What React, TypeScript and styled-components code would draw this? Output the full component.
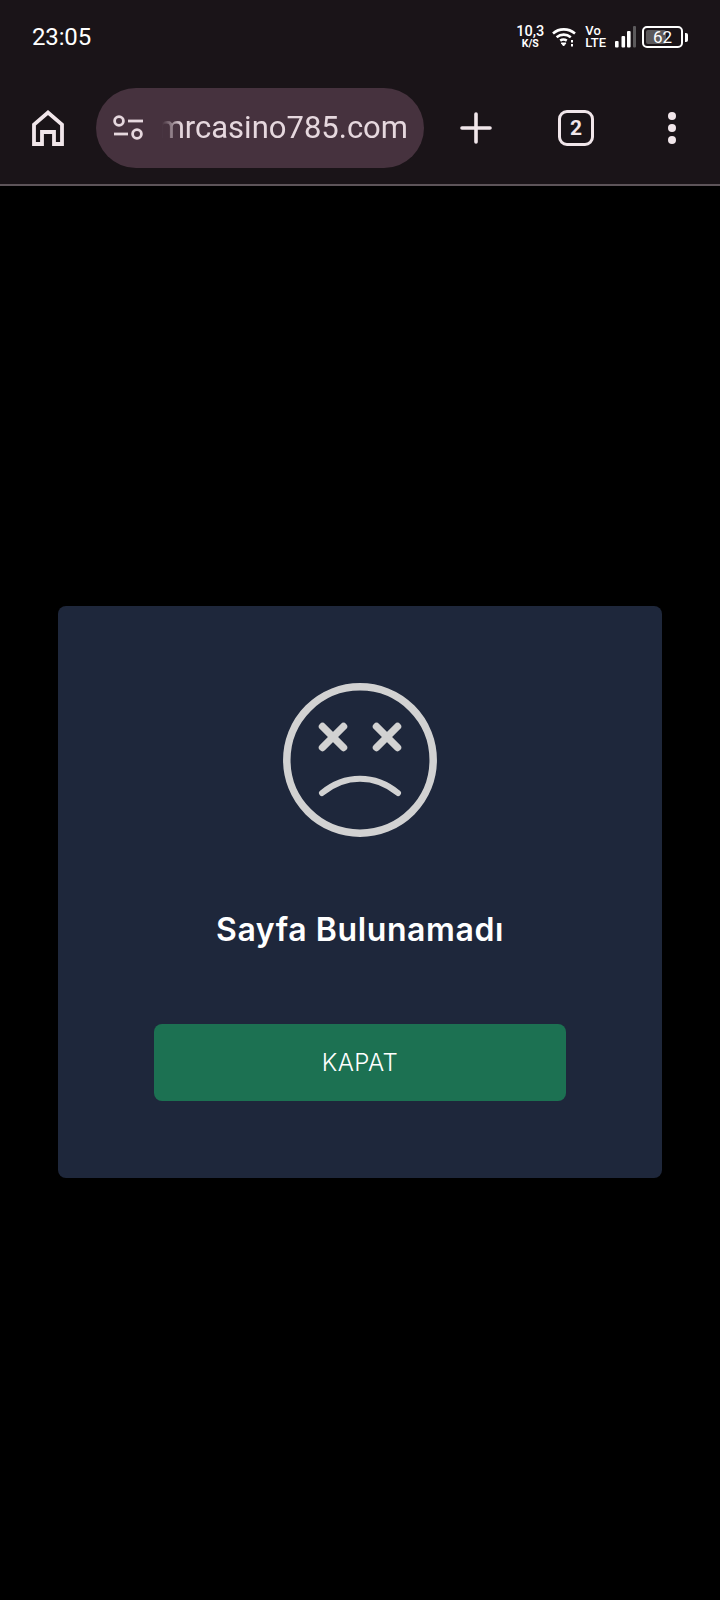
import { createGlobalStyle, styled } from "styled-components";

const GlobalStyle = createGlobalStyle`
  html, body {
    margin: 0;
    padding: 0;
    background: #000;
  }
  body {
    font-family: "Roboto", "Liberation Sans", sans-serif;
  }
`;

function HomeIcon() {
  return (
    <svg width="32" height="36" viewBox="0 0 32 36" fill="none">
      <path
        d="M2 34V14.5L16 2.5L30 14.5V34H22V22H10V34Z"
        stroke="#f1e6ea"
        strokeWidth="3.8"
      />
    </svg>
  );
}

function TuneIcon() {
  return (
    <svg width="30" height="26" viewBox="0 0 30 26" fill="none" stroke="#e6d8de" strokeWidth="2.8">
      <circle cx="6" cy="6" r="4.4" />
      <circle cx="24" cy="19" r="4.4" />
      <path d="M15 6H30" />
      <path d="M1 19H15" />
    </svg>
  );
}

function PlusIcon() {
  return (
    <svg width="32" height="32" viewBox="0 0 32 32" fill="none" stroke="#f1e6ea" strokeWidth="3.6" strokeLinecap="round">
      <path d="M16 2V30" />
      <path d="M2 16H30" />
    </svg>
  );
}

function WifiIcon() {
  return (
    <svg width="24" height="20" viewBox="0 0 24 20" fill="none" stroke="#fff" strokeWidth="2.6">
      <path d="M1 6.5C7 1 16.5 1 23 6.5" />
      <path d="M4.6 10.2C8.8 6.8 14.6 6.8 18.8 10.2" />
      <path d="M8.2 13.6C10.2 12.2 12.6 12.2 14.8 13.6" />
      <path d="M9.2 16L14 16L11.6 19Z" fill="#fff" strokeWidth="1" />
      <path d="M20 13V15.4" strokeWidth="2" />
      <path d="M20 17V19.4" strokeWidth="2" />
    </svg>
  );
}

function SignalIcon() {
  return (
    <svg width="21" height="22" viewBox="0 0 21 22">
      <rect x="0" y="15" width="3.6" height="6.5" rx="1" fill="#fff" />
      <rect x="6.5" y="10" width="3.6" height="11.5" rx="1" fill="#fff" />
      <rect x="12" y="5" width="3.6" height="16.5" rx="1" fill="#fff" />
      <rect x="18" y="0" width="3" height="21.5" rx="1" fill="#5c5a5c" />
    </svg>
  );
}

function SadFace() {
  return (
    <svg width="154" height="154" viewBox="0 0 154 154" fill="none" stroke="#d2d2d2" strokeLinecap="round">
      <circle cx="77" cy="77" r="73.2" strokeWidth="7.5" />
      <g strokeWidth="7.4">
        <path d="M39.5 43.5L60.5 64.5" />
        <path d="M60.5 43.5L39.5 64.5" />
        <path d="M93.5 43.5L114.5 64.5" />
        <path d="M114.5 43.5L93.5 64.5" />
      </g>
      <path d="M39 110C62 91 92 91 115 110" strokeWidth="6" />
    </svg>
  );
}

export default function App() {
  return (
    <>
      <GlobalStyle />
      <Page>
        <Chrome>
          <StatusBar>
            <Clock>23:05</Clock>
            <StatusIcons>
              <Speed>
                <SpeedValue>10,3</SpeedValue>
                <SpeedUnit>K/S</SpeedUnit>
              </Speed>
              <WifiIcon />
              <Volte>
                <span>Vo</span>
                <span>LTE</span>
              </Volte>
              <SignalIcon />
              <Battery>
                <BatteryBody>
                  <BatteryFill />
                  <BatteryLevel>62</BatteryLevel>
                </BatteryBody>
                <BatteryCap />
              </Battery>
            </StatusIcons>
          </StatusBar>
          <Toolbar>
            <HomeIcon />
            <UrlPill>
              <TuneIcon />
              <UrlClip>
                <UrlText>mrcasino785.com</UrlText>
              </UrlClip>
            </UrlPill>
            <PlusSlot>
              <PlusIcon />
            </PlusSlot>
            <TabCount>2</TabCount>
            <MenuDots>
              <Dot />
              <Dot />
              <Dot />
            </MenuDots>
          </Toolbar>
        </Chrome>
        <Content>
          <Card>
            <SadFace />
            <Title>Sayfa Bulunamadı</Title>
            <CloseButton>KAPAT</CloseButton>
          </Card>
        </Content>
      </Page>
    </>
  );
}

const Page = styled.div`
  width: 720px;
  height: 1600px;
  background: #000;
  overflow: hidden;
`;

const Chrome = styled.header`
  height: 184px;
  background: #1a1418;
  border-bottom: 2px solid #5d5459;
`;

const StatusBar = styled.div`
  height: 74px;
  padding: 0 32px;
  display: flex;
  align-items: center;
  justify-content: space-between;
`;

const Clock = styled.span`
  font-size: 24px;
  letter-spacing: -0.15px;
  color: #fff;
`;

const StatusIcons = styled.div`
  display: flex;
  align-items: center;
  gap: 9px;
`;

const Speed = styled.div`
  display: flex;
  flex-direction: column;
  align-items: center;
  gap: 1px;
  margin-right: -1px;
  color: #fff;
  font-weight: 500;
`;

const SpeedValue = styled.span`
  font-size: 14.5px;
  line-height: 13px;
`;

const SpeedUnit = styled.span`
  font-size: 10.5px;
  line-height: 10px;
  font-weight: 700;
`;

const Volte = styled.div`
  display: flex;
  flex-direction: column;
  color: #fff;
  font-size: 13px;
  line-height: 12px;
  font-weight: 500;
`;

const Battery = styled.div`
  display: flex;
  align-items: center;
  gap: 2px;
  margin-left: -3px;
`;

const BatteryBody = styled.div`
  position: relative;
  width: 41px;
  height: 22px;
  box-sizing: border-box;
  border: 2px solid #fff;
  border-radius: 5px;
  padding: 2px;
`;

const BatteryFill = styled.div`
  width: 62%;
  height: 100%;
  background: #5b585a;
  border-radius: 2px;
`;

const BatteryLevel = styled.span`
  position: absolute;
  inset: 0;
  display: flex;
  align-items: center;
  justify-content: center;
  color: #fff;
  font-size: 17px;
`;

const BatteryCap = styled.div`
  width: 3px;
  height: 9px;
  background: #fff;
  border-radius: 0 2px 2px 0;
`;

const Toolbar = styled.div`
  height: 108px;
  padding-left: 32px;
  display: flex;
  align-items: center;
`;

const UrlPill = styled.div`
  width: 328px;
  height: 80px;
  margin-left: 32px;
  box-sizing: border-box;
  padding: 0 16px 0 17px;
  border-radius: 40px;
  background: #46323e;
  display: flex;
  align-items: center;
  gap: 17px;
`;

const UrlClip = styled.div`
  flex: 1;
  display: flex;
  justify-content: flex-end;
  overflow: hidden;
  mask-image: linear-gradient(to right, transparent 2px, #000 22px);
`;

const UrlText = styled.span`
  font-size: 31px;
  line-height: 40px;
  color: #e6d8de;
  white-space: nowrap;
`;

const PlusSlot = styled.div`
  width: 32px;
  height: 32px;
  margin-left: 36px;
`;

const TabCount = styled.div`
  width: 36px;
  height: 36px;
  margin-left: 66px;
  box-sizing: border-box;
  border: 3.5px solid #f1e6ea;
  border-radius: 9px;
  display: flex;
  align-items: center;
  justify-content: center;
  color: #f1e6ea;
  font-size: 21px;
  font-weight: 700;
`;

const MenuDots = styled.div`
  margin-left: 74px;
  display: flex;
  flex-direction: column;
  gap: 4px;
`;

const Dot = styled.span`
  width: 8px;
  height: 8px;
  border-radius: 50%;
  background: #f1e6ea;
`;

const Content = styled.main`
  padding-top: 420px;
  display: flex;
  justify-content: center;
`;

const Card = styled.section`
  width: 604px;
  height: 572px;
  box-sizing: border-box;
  padding-top: 77px;
  background: #1e273b;
  border-radius: 8px;
  display: flex;
  flex-direction: column;
  align-items: center;
`;

const Title = styled.h1`
  margin: 73px 0 0;
  font-family: "Inter", "Liberation Sans", sans-serif;
  font-size: 32px;
  line-height: 40px;
  letter-spacing: 0.6px;
  font-weight: 600;
  color: #fff;
`;

const CloseButton = styled.button`
  width: 412px;
  height: 77px;
  margin-top: 74px;
  border: 0;
  border-radius: 8px;
  background: #1c7152;
  color: #fff;
  font-family: "Inter", "Liberation Sans", sans-serif;
  font-size: 24px;
  font-weight: 300;
  letter-spacing: 0.4px;
`;
